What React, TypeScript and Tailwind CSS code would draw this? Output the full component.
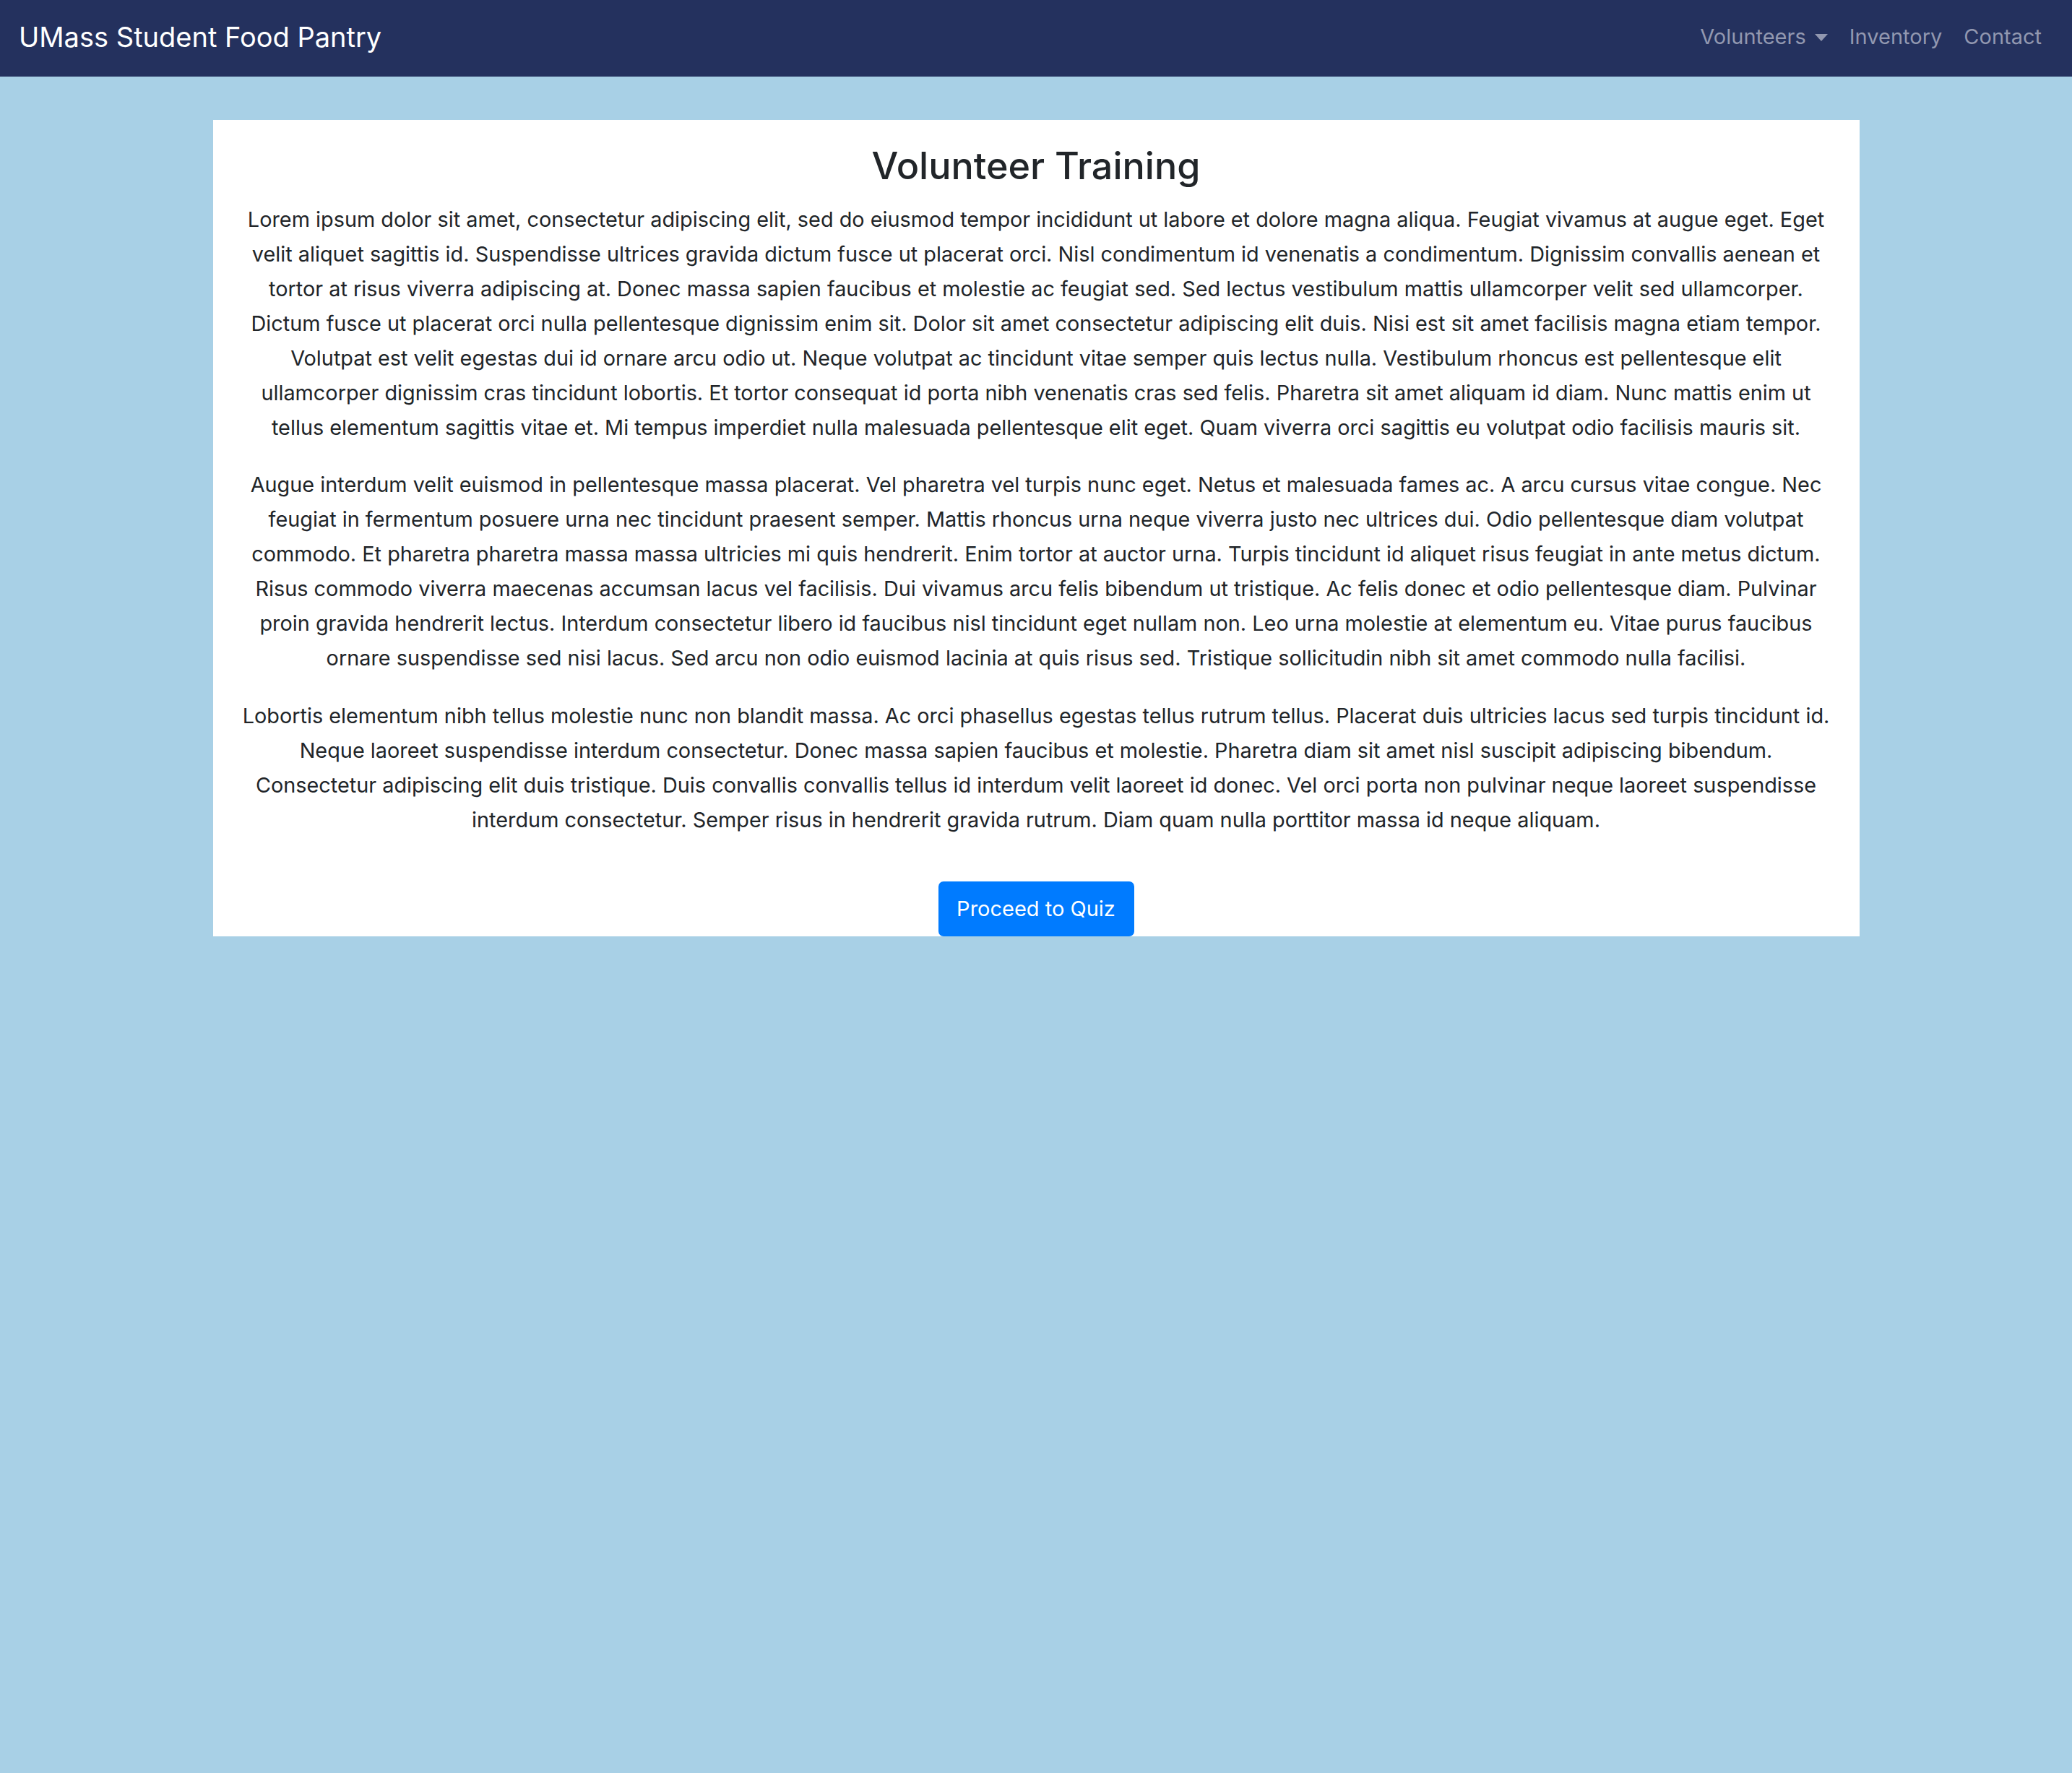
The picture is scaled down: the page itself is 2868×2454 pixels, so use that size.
import React from "react";

const p1 = [
  "Lorem ipsum dolor sit amet, consectetur adipiscing elit, sed do eiusmod tempor incididunt ut labore et dolore magna aliqua. Feugiat vivamus at augue eget. Eget",
  "velit aliquet sagittis id. Suspendisse ultrices gravida dictum fusce ut placerat orci. Nisl condimentum id venenatis a condimentum. Dignissim convallis aenean et",
  "tortor at risus viverra adipiscing at. Donec massa sapien faucibus et molestie ac feugiat sed. Sed lectus vestibulum mattis ullamcorper velit sed ullamcorper.",
  "Dictum fusce ut placerat orci nulla pellentesque dignissim enim sit. Dolor sit amet consectetur adipiscing elit duis. Nisi est sit amet facilisis magna etiam tempor.",
  "Volutpat est velit egestas dui id ornare arcu odio ut. Neque volutpat ac tincidunt vitae semper quis lectus nulla. Vestibulum rhoncus est pellentesque elit",
  "ullamcorper dignissim cras tincidunt lobortis. Et tortor consequat id porta nibh venenatis cras sed felis. Pharetra sit amet aliquam id diam. Nunc mattis enim ut",
  "tellus elementum sagittis vitae et. Mi tempus imperdiet nulla malesuada pellentesque elit eget. Quam viverra orci sagittis eu volutpat odio facilisis mauris sit.",
];
const p2 = [
  "Augue interdum velit euismod in pellentesque massa placerat. Vel pharetra vel turpis nunc eget. Netus et malesuada fames ac. A arcu cursus vitae congue. Nec",
  "feugiat in fermentum posuere urna nec tincidunt praesent semper. Mattis rhoncus urna neque viverra justo nec ultrices dui. Odio pellentesque diam volutpat",
  "commodo. Et pharetra pharetra massa massa ultricies mi quis hendrerit. Enim tortor at auctor urna. Turpis tincidunt id aliquet risus feugiat in ante metus dictum.",
  "Risus commodo viverra maecenas accumsan lacus vel facilisis. Dui vivamus arcu felis bibendum ut tristique. Ac felis donec et odio pellentesque diam. Pulvinar",
  "proin gravida hendrerit lectus. Interdum consectetur libero id faucibus nisl tincidunt eget nullam non. Leo urna molestie at elementum eu. Vitae purus faucibus",
  "ornare suspendisse sed nisi lacus. Sed arcu non odio euismod lacinia at quis risus sed. Tristique sollicitudin nibh sit amet commodo nulla facilisi.",
];
const p3 = [
  "Lobortis elementum nibh tellus molestie nunc non blandit massa. Ac orci phasellus egestas tellus rutrum tellus. Placerat duis ultricies lacus sed turpis tincidunt id.",
  "Neque laoreet suspendisse interdum consectetur. Donec massa sapien faucibus et molestie. Pharetra diam sit amet nisl suscipit adipiscing bibendum.",
  "Consectetur adipiscing elit duis tristique. Duis convallis convallis tellus id interdum velit laoreet id donec. Vel orci porta non pulvinar neque laoreet suspendisse",
  "interdum consectetur. Semper risus in hendrerit gravida rutrum. Diam quam nulla porttitor massa id neque aliquam.",
];

function Para({ lines, className }: { lines: string[]; className?: string }) {
  return (
    <p className={className}>
      {lines.map((l, i) => (
        <span key={i} className="block whitespace-nowrap">
          {l}
        </span>
      ))}
    </p>
  );
}

export default function App() {
  return (
    <div className="min-h-screen bg-[#a8d0e6] font-[Inter,sans-serif] text-[#212529]">
      <nav className="flex h-[106px] items-center justify-between bg-[#24315e] pb-[4px] pl-[26px] pr-[27px]">
        <a className="text-[38px] leading-none text-white">UMass Student Food Pantry</a>
        <ul className="flex items-center text-[29px] text-[#9298b0]">
          <li className="flex items-center px-[15px]">
            Volunteers
            <span className="ml-[12px] mt-[2px] h-0 w-0 border-x-[9px] border-t-[10px] border-x-transparent border-t-[#9298b0]" />
          </li>
          <li className="px-[15px]">Inventory</li>
          <li className="px-[15px]">Contact</li>
        </ul>
      </nav>
      <div className="mx-auto mt-[60px] flex w-[2279px] flex-col items-center bg-white px-[30px] text-center">
        <h1 className="mt-[31px] mb-[17px] text-[52px] font-medium leading-[66px]">Volunteer Training</h1>
        <Para lines={p1} className="text-[28.85px] leading-[48px]" />
        <Para lines={p2} className="mt-[31px] text-[28.85px] leading-[48px]" />
        <Para lines={p3} className="mt-[32px] text-[28.85px] leading-[48px]" />
        <button className="mt-[61px] h-[76px] w-[271px] rounded-[7px] bg-[#007bff] text-[29px] text-white">
          Proceed to Quiz
        </button>
      </div>
    </div>
  );
}
